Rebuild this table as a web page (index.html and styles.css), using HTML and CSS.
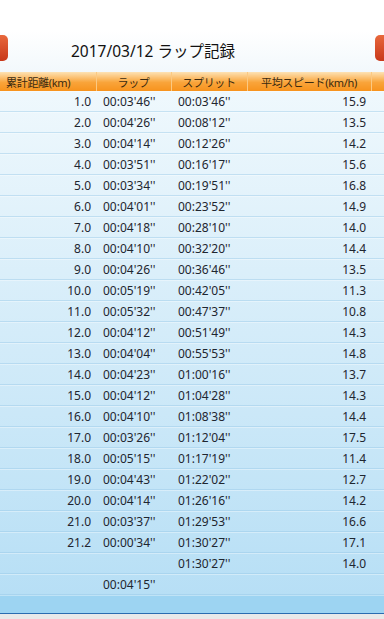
FILE: index.html
```html
<!DOCTYPE html>
<html lang="ja">
<head>
    <meta charset="UTF-8">
    <meta name="viewport" content="width=device-width, initial-scale=1.0">
    <title>ラップ記録</title>
    <link rel="stylesheet" href="styles.css">
</head>
<body>

<div class="top-space"></div>

<div class="title-bar">
    <button class="nav-btn nav-left"></button>
    <h2 class="title">2017/03/12 ラップ記録</h2>
    <button class="nav-btn nav-right"></button>
</div>

<table id="lap-table">
    <colgroup>
        <col class="c-dist">
        <col class="c-lap">
        <col class="c-split">
        <col class="c-speed">
        <col class="c-rest">
    </colgroup>
    <thead>
        <tr>
            <th class="h-dist">累計距離(km)</th>
            <th>ラップ</th>
            <th>スプリット</th>
            <th>平均スピード(km/h)</th>
            <th></th>
        </tr>
    </thead>
    <tbody id="lap-tbody">
        <!-- filas generadas abajo -->
    </tbody>
</table>

<div class="bottom-bar"></div>

<script>
    const laps = [
        ["1.0", "00:03'46''", "00:03'46''", "15.9"],
        ["2.0", "00:04'26''", "00:08'12''", "13.5"],
        ["3.0", "00:04'14''", "00:12'26''", "14.2"],
        ["4.0", "00:03'51''", "00:16'17''", "15.6"],
        ["5.0", "00:03'34''", "00:19'51''", "16.8"],
        ["6.0", "00:04'01''", "00:23'52''", "14.9"],
        ["7.0", "00:04'18''", "00:28'10''", "14.0"],
        ["8.0", "00:04'10''", "00:32'20''", "14.4"],
        ["9.0", "00:04'26''", "00:36'46''", "13.5"],
        ["10.0", "00:05'19''", "00:42'05''", "11.3"],
        ["11.0", "00:05'32''", "00:47'37''", "10.8"],
        ["12.0", "00:04'12''", "00:51'49''", "14.3"],
        ["13.0", "00:04'04''", "00:55'53''", "14.8"],
        ["14.0", "00:04'23''", "01:00'16''", "13.7"],
        ["15.0", "00:04'12''", "01:04'28''", "14.3"],
        ["16.0", "00:04'10''", "01:08'38''", "14.4"],
        ["17.0", "00:03'26''", "01:12'04''", "17.5"],
        ["18.0", "00:05'15''", "01:17'19''", "11.4"],
        ["19.0", "00:04'43''", "01:22'02''", "12.7"],
        ["20.0", "00:04'14''", "01:26'16''", "14.2"],
        ["21.0", "00:03'37''", "01:29'53''", "16.6"],
        ["21.2", "00:00'34''", "01:30'27''", "17.1"],
        ["", "", "01:30'27''", "14.0"],
        ["", "00:04'15''", "", ""]
    ];

    const tbody = document.getElementById('lap-tbody');
    laps.forEach(row => {
        const tr = document.createElement('tr');
        tr.innerHTML = `
            <td class="dist">${row[0]}</td>
            <td>${row[1]}</td>
            <td>${row[2]}</td>
            <td class="speed">${row[3]}</td>
            <td></td>
        `;
        tbody.appendChild(tr);
    });
    const blank = document.createElement('tr');
    blank.className = 'blank-row';
    blank.innerHTML = '<td colspan="5"></td>';
    tbody.appendChild(blank);
</script>

</body>
</html>
```

FILE: styles.css
```css
body {
    margin: 0;
    width: 384px;
    height: 619px;
    overflow: hidden;
    background-color: #e9e9e9;
    font-family: "Noto Sans", "Noto Sans CJK JP", sans-serif;
    color: #1f2630;
}
.top-space {
    height: 30px;
    background-color: #ffffff;
}
.title-bar {
    display: flex;
    align-items: center;
    height: 42px;
    overflow: hidden;
    background: linear-gradient(#ffffff, #f2f8fc);
}
.title {
    margin: 0 0 0 63px;
    flex: 1;
    font-size: 15.5px;
    font-weight: normal;
    line-height: 20px;
    color: #111;
}
.nav-btn {
    flex: none;
    width: 30px;
    height: 26px;
    border: none;
    border-radius: 5px;
    background: linear-gradient(#e8683c, #c8381a);
    padding: 0;
    margin-top: -6px;
}
.nav-left {
    margin-left: -22px;
}
.nav-right {
    margin-right: -21px;
}
table {
    width: 384px;
    border-collapse: collapse;
    table-layout: fixed;
    background: linear-gradient(#f1f9fd, #b5def5);
}
.c-dist { width: 96px; }
.c-lap { width: 75px; }
.c-split { width: 76px; }
.c-speed { width: 124px; }
.c-rest { width: 13px; }
th {
    height: 19px;
    padding: 0;
    font-size: 11px;
    font-weight: normal;
    letter-spacing: -0.3px;
    color: #3a2a10;
    text-align: center;
    white-space: nowrap;
    overflow: hidden;
    background: linear-gradient(#fde2b4, #f9a43a 55%, #f7931d);
    border-right: 1px solid #fbc982;
}
th.h-dist {
    text-align: left;
    padding-left: 6px;
}
td {
    height: 20px;
    padding: 0 0 0 7px;
    font-size: 12px;
    white-space: nowrap;
    border-bottom: 1px solid rgba(150, 200, 230, 0.45);
    box-shadow: inset 0 1px 0 rgba(255, 255, 255, 0.35);
}
td.dist {
    text-align: right;
    padding: 0 5px 0 0;
}
td.speed {
    text-align: right;
    padding: 0 5px 0 0;
}
.blank-row td {
    height: 18px;
    border-bottom: none;
    background-color: #9dd4f2;
}
.bottom-bar {
    height: 1px;
    background-color: #2a6cb0;
}
```
